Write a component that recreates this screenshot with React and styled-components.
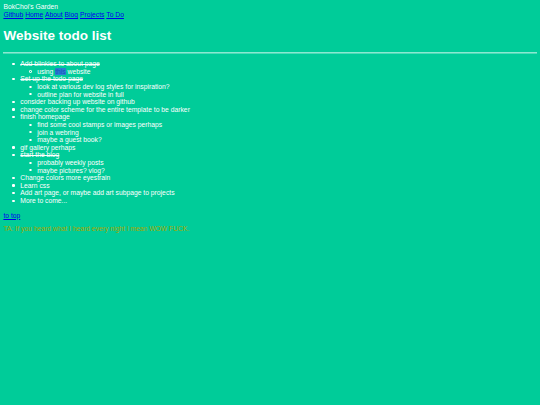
import React from 'react'
import styled, { createGlobalStyle } from 'styled-components'

// original page is 1280 wide, photographed at 540 → everything scaled by 0.421875
const GlobalStyle = createGlobalStyle`
    html, body {
        margin: 0;
        padding: 0;
        background: #00cc99;
    }
    body {
        padding: 3.4px;
        font-family: "Liberation Sans", Arial, sans-serif;
        font-size: 6.75px;
        line-height: 1.15;
        color: #ffffff;
        min-height: 405px;
        box-sizing: border-box;
    }
`

const Header = styled.header``

const SiteName = styled.div``

const Nav = styled.nav`
    display: flex;
    gap: 1.9px;
`

const Link = styled.a`
    color: #0000ee;
    text-decoration: underline;
`

const Title = styled.h1`
    font-size: 13.5px;
    font-weight: bold;
    margin: 9px 0;
`

const Rule = styled.hr`
    margin: 0;
    border: none;
    border-top: 0.8px solid rgba(255, 255, 255, 0.55);
    border-bottom: 0.8px solid rgba(255, 255, 255, 0.3);
`

const List = styled.ul`
    margin: ${p => (p.nested ? '0' : '5.8px 0 0')};
    padding-left: 16.9px;
    list-style: none;
`

const Item = styled.li`
    position: relative;
    line-height: 7.6px;

    &::before {
        content: '';
        position: absolute;
        left: -7.8px;
        top: 2.7px;
        width: 2.2px;
        height: 2.2px;
        border-radius: 50%;
        box-sizing: border-box;
        background: ${p => (p.nested ? 'transparent' : '#ffffff')};
        border: ${p => (p.nested ? '0.6px solid #ffffff' : 'none')};
    }
`

const Text = styled.span`
    text-decoration: ${p => (p.done ? 'line-through' : 'none')};
`

const Mark = styled.span`
    background: #2a7fd4;
    color: #1d4fb8;
`

const Footer = styled.footer`
    display: flex;
    flex-direction: column;
    align-items: flex-start;
    gap: 5.8px;
    margin-top: 7.2px;
`

const Quote = styled.div`
    color: #a8a800;
`

const todos = [
    { text: 'Add blinkies to about page', done: true, sub: [<>using <Mark>this</Mark> website</>] },
    { text: 'Set up the todo page', done: true, sub: ['look at various dev log styles for inspiration?', 'outline plan for website in full'] },
    { text: 'consider backing up website on github' },
    { text: 'change color scheme for the entire template to be darker' },
    { text: 'finish homepage', sub: ['find some cool stamps or images perhaps', 'join a webring', 'maybe a guest book?'] },
    { text: 'gif gallery perhaps' },
    { text: 'start the blog', done: true, sub: ['probably weekly posts', 'maybe pictures? vlog?'] },
    { text: 'Change colors more eyestrain' },
    { text: 'Learn css' },
    { text: 'Add art page, or maybe add art subpage to projects' },
    { text: 'More to come...' },
]

const App = () => {
    return (
        <>
            <GlobalStyle />
            <Header id="top">
                <SiteName>BokChoi's Garden</SiteName>
                <Nav>
                    <Link href="#">Github</Link>
                    <Link href="#">Home</Link>
                    <Link href="#">About</Link>
                    <Link href="#">Blog</Link>
                    <Link href="#">Projects</Link>
                    <Link href="#">To Do</Link>
                </Nav>
            </Header>
            <Title>Website todo list</Title>
            <Rule />
            <List>
                {todos.map((t, i) => (
                    <Item key={i}>
                        <Text done={t.done}>{t.text}</Text>
                        {t.sub && (
                            <List nested>
                                {t.sub.map((s, j) => (
                                    <Item key={j} nested>
                                        {s}
                                    </Item>
                                ))}
                            </List>
                        )}
                    </Item>
                ))}
            </List>
            <Footer>
                <Link href="#top">to top</Link>
                <Quote>TA: If you heard what I heard every night I mean WOW FUCK.</Quote>
            </Footer>
        </>
    )
}

export default App
